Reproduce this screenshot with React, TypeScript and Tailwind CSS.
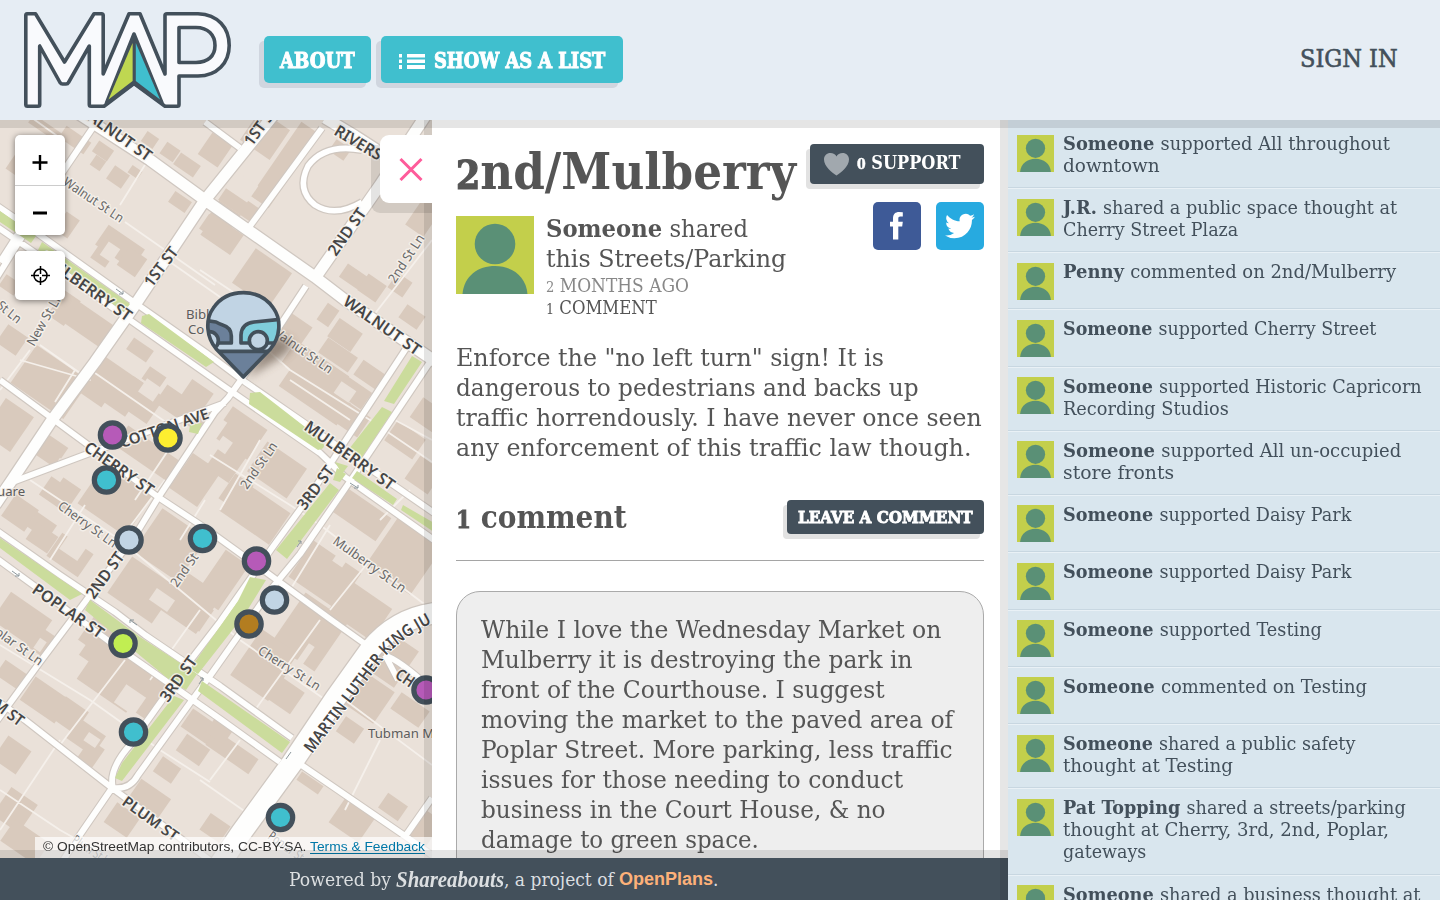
import { useLayoutEffect, useRef } from "react";
import type { ReactNode } from "react";

/* Sets one line of text to a given measure. */
function Fit({ w, children, className = "" }: { w: number; children: ReactNode; className?: string }) {
  const ref = useRef<HTMLSpanElement>(null);
  useLayoutEffect(() => {
    const el = ref.current;
    if (el && el.offsetWidth) el.style.transform = `scaleX(${w / el.offsetWidth})`;
  }, [w]);
  return (
    <span className={`block whitespace-nowrap ${className}`} style={{ width: w }}>
      <span ref={ref} className="inline-block origin-left">{children}</span>
    </span>
  );
}

/* A digit drawn at x-height. */
function Fig({ children, className = "" }: { children: ReactNode; className?: string }) {
  return <span className={`text-[0.77em] leading-none ${className}`}>{children}</span>;
}

type Pt = [number, number];

const thinStreets = [
  "M98,120L60,176L-6,282", "M0,262L30,215", "M205,122L240,148", "M322,128L250,226", "M0,380L95,450L158,497L205,528L270,575L330,619L365,644",
  "M10,483L90,453L225,403", "M306,286L275,333L228,398L215,412L158,498L136,534L82,606L40,662L-4,722",
  "M0,703L25,720L112,788L180,838L212,862", "M112,788L75,842L62,862", "M300,764L405,836L436,858",
  "M432,798L404,838", "M384,655Q400,660 432,690", "M385,655L398,680",
  "M-4,205L37,233L128,298L205,352L245,382L300,420L350,455L434,513",
  "M-4,226L60,270L127,318L225,387L320,453L345,477L434,540",
  "M-4,530L60,575L115,612L145,635L220,686L292,738",
  "M-4,558L40,590L110,642L190,698L220,719L280,762",
  "M407,347L338,452L307,500L272,548L220,622L190,661L130,745Q108,770 113,788",
  "M436,353L353,477L300,554L272,588L212,673L190,703L138,775Q130,790 113,788",
];
const wideStreets = [
  "M76,112L150,160L205,200L315,277L345,300L436,362",
  "M276,112L205,200L135,305L95,362L52,420L12,480L-5,505",
  "M428,112L380,185L315,278",
  "M325,118L355,136L400,165",
];
const mlk = "M436,613Q396,618 370,650L335,699L292,763L241,833L220,864";
const alleys = [
  "M148,160L120,205", "M125,222L215,285", "M0,95L60,138", "M160,255L220,297", "M40,345L90,380L20,360", "M200,270L245,300", "M40,345L75,370L55,402",
  "M95,373L180,432", "M245,330L290,370L370,420L432,462", "M210,455L290,505L320,525L432,610", "M30,480L120,540L180,590L240,640L340,710",
  "M0,645L90,700L160,750L210,782", "M330,525L290,590", "M370,560L330,610", "M125,660L60,745", "M60,740L0,830", "M0,790L60,830L110,858",
  "M345,700L432,765", "M380,740L345,810", "M320,620L255,710", "M205,500L180,540", "M165,480L120,540", "M260,440L220,510",
  "M395,420L432,440", "M410,490L380,520", "M200,610L150,680", "M240,740L210,780", "M200,780L250,815", "M290,380L350,420", "M85,505L50,560",
  "M432,240L370,320", "M350,300L432,365", "M30,350L0,390", "M175,440L135,500",
];
const greens = [
  "M0,211L36,236L31,243L0,222Z", "M42,242L130,304L124,312L38,250Z", "M142,316L149,314L214,362L206,367L141,323Z",
  "M250,393L260,392L318,437Q330,448 318,450L249,404Z", "M337,468L346,474L340,482L333,480Z", "M357,471L397,499L393,505L352,478Z", "M403,505L434,523L434,532L401,510Z",
  "M412,356L422,362L394,404L384,401Z", "M382,407L392,412L360,460L349,449Z", "M335,462L348,466L342,474Z",
  "M330,483L339,490L287,559L276,550Z", "M250,577L266,580L245,614L198,674L190,669L238,601Z",
  "M0,538L82,594L70,600L0,548Z", "M90,600L140,637L197,674L186,690L172,682L85,610Z", "M202,681L290,742L282,753L198,691Z",
  "M174,696L184,700L122,781L115,778L122,763Z", "M190,425L202,423L198,434L189,432Z",
];
/* centre x, centre y, width, height; aligned to the street grid */
const buildings: [number, number, number, number][] = [
  [45, 128, 34, 10], [75, 140, 30, 14], [103, 151, 18, 13], [98, 163, 12, 12], [118, 177, 18, 16], [135, 172, 12, 9], [170, 152, 16, 14], [187, 165, 24, 14], [180, 202, 20, 13],
  [150, 140, 14, 12], [215, 150, 24, 26], [225, 215, 26, 18], [285, 165, 22, 90], [265, 135, 36, 36], [240, 205, 42, 16], [222, 235, 36, 24], [262, 278, 44, 42],
  [215, 228, 20, 16], [67, 225, 16, 22], [20, 165, 20, 22], [40, 200, 22, 20], [120, 247, 44, 24], [132, 262, 22, 22], [105, 252, 18, 26], [214, 228, 24, 18], [64, 308, 20, 30],
  [10, 285, 18, 14], [12, 340, 24, 22], [140, 350, 24, 14], [90, 325, 44, 26], [355, 278, 28, 16], [372, 288, 22, 20], [412, 317, 22, 16],
  [328, 315, 14, 20], [345, 335, 28, 22], [338, 355, 36, 18], [370, 375, 28, 18], [295, 330, 26, 24], [315, 370, 64, 28], [350, 390, 40, 20],
  [50, 382, 64, 46], [8, 425, 34, 42], [112, 388, 54, 44], [140, 400, 38, 32], [154, 378, 20, 15], [185, 410, 58, 22], [195, 398, 26, 28], [50, 450, 28, 24], [147, 453, 62, 24], [60, 492, 32, 28], [115, 500, 58, 48],
  [20, 513, 28, 26], [42, 526, 24, 18], [70, 555, 38, 28], [42, 538, 26, 20], [195, 480, 34, 42], [240, 433, 42, 36], [226, 462, 28, 32], [277, 470, 48, 36], [255, 512, 60, 38], [236, 492, 22, 30],
  [170, 545, 54, 52], [142, 590, 54, 44], [190, 602, 46, 46], [222, 580, 28, 54], [315, 395, 70, 26], [350, 418, 34, 24], [405, 440, 34, 24], [428, 415, 28, 24], [424, 475, 28, 28], [362, 515, 52, 28],
  [405, 555, 54, 60], [325, 575, 58, 44], [360, 610, 52, 38], [310, 632, 52, 60], [265, 665, 46, 56], [285, 695, 30, 26], [385, 655, 52, 44], [365, 695, 46, 38], [350, 730, 22, 18],
  [22, 620, 50, 34], [42, 642, 22, 24], [95, 638, 26, 46], [115, 676, 60, 48], [150, 697, 30, 42], [45, 700, 42, 28], [70, 715, 28, 26], [86, 737, 32, 24], [90, 755, 18, 26], [12, 675, 28, 18],
  [12, 755, 28, 28], [15, 810, 32, 34], [25, 842, 42, 26], [122, 820, 28, 24], [150, 798, 36, 22], [167, 770, 22, 18], [205, 730, 44, 22], [193, 750, 28, 20], [232, 752, 52, 18], [220, 730, 22, 20],
  [195, 613, 28, 26], [310, 783, 26, 10], [352, 820, 36, 30], [393, 807, 24, 18], [425, 830, 20, 34], [215, 828, 24, 20], [410, 710, 34, 20], [400, 285, 18, 18], [425, 215, 22, 38], [340, 150, 18, 14],
];
const openLots: [number, number, number, number][] = [
  [242, 187, 26, 20], [110, 252, 14, 16], [112, 415, 26, 12], [150, 390, 18, 16], [224, 445, 12, 14], [345, 392, 18, 14], [162, 600, 22, 14], [70, 650, 20, 26], [130, 700, 24, 22],
  [75, 545, 22, 24], [60, 470, 14, 20], [305, 655, 7, 24], [298, 668, 16, 12], [215, 430, 12, 26], [92, 740, 14, 10], [340, 560, 12, 10], [40, 645, 8, 12],
];

const caps: { t: string; a: Pt; b: Pt; s: number }[] = [
  { t: "WALNUT ST", a: [75, 111], b: [147, 162], s: 16 }, { t: "1ST ST", a: [152, 288], b: [179, 252], s: 16 }, { t: "1ST ST", a: [252, 147], b: [279, 110], s: 16 },
  { t: "MULBERRY ST", a: [39, 260], b: [127, 322], s: 16 }, { t: "RIVERS", a: [333, 134], b: [378, 161], s: 16 }, { t: "2ND ST", a: [336, 257], b: [367, 213], s: 16 },
  { t: "WALNUT ST", a: [342, 304], b: [416, 356], s: 16 }, { t: "COTTON AVE", a: [122, 448], b: [210, 418], s: 15 }, { t: "CHERRY ST", a: [83, 450], b: [149, 496], s: 16 },
  { t: "2ND ST", a: [94, 600], b: [125, 557], s: 16 }, { t: "POPLAR ST", a: [31, 592], b: [99, 639], s: 16 }, { t: "MULBERRY ST", a: [303, 429], b: [390, 491], s: 16 },
  { t: "3RD ST", a: [305, 511], b: [335, 471], s: 16 }, { t: "3RD ST", a: [168, 703], b: [198, 661], s: 16 }, { t: "PLUM ST", a: [121, 804], b: [174, 842], s: 15 },
  { t: "M ST", a: [-8, 707], b: [19, 727], s: 16 }, { t: "CH", a: [394, 677], b: [410, 688], s: 16 },
];
const lanes: { t: string; a: Pt; b: Pt }[] = [
  { t: "Walnut St Ln", a: [62, 184], b: [120, 223] }, { t: "New St Ln", a: [34, 347], b: [63, 296] }, { t: "St Ln", a: [-4, 307], b: [17, 324] }, { t: "2nd St Ln", a: [395, 284], b: [425, 238] },
  { t: "Walnut St Ln", a: [270, 333], b: [329, 374] }, { t: "Cherry St Ln", a: [57, 508], b: [113, 548] }, { t: "2nd St", a: [177, 588], b: [199, 557] },
  { t: "2nd St Ln", a: [247, 490], b: [278, 446] }, { t: "Mulberry St Ln", a: [332, 543], b: [402, 593] }, { t: "plar St Ln", a: [-6, 634], b: [39, 666] },
  { t: "Cherry St Ln", a: [257, 653], b: [317, 691] }, { t: "Plum St Ln", a: [71, 842], b: [110, 868] }, { t: "Poplar St", a: [267, 838], b: [300, 862] },
];
const pins: [number, number, string][] = [
  [112.5, 435, "#b65ab8"], [168, 438, "#fdee30"], [106.5, 480, "#40bfce"], [129, 540, "#c1d4e4"], [202.5, 538.5, "#40bfce"], [256.5, 561, "#b65ab8"], [274.5, 600, "#c1d4e4"],
  [249, 624, "#b37d20"], [123, 643.5, "#c1ee52"], [133.5, 732, "#40bfce"], [280.5, 817.5, "#40bfce"], [426, 690, "#b65ab8"],
];

function PathText({ t, a, b, size, bold }: { t: string; a: Pt; b: Pt; size: number; bold?: boolean }) {
  const dx = b[0] - a[0];
  const dy = b[1] - a[1];
  return (
    <text
      transform={`translate(${a[0]} ${a[1]}) rotate(${(Math.atan2(dy, dx) * 180) / Math.PI})`}
      fontSize={size}
      fontWeight={bold ? 600 : 400}
      fill={bold ? "#464646" : "#686868"}
      stroke="#f7f3ee"
      strokeOpacity={0.8}
      strokeWidth={3}
      paintOrder="stroke"
      textLength={Math.hypot(dx, dy)}
      lengthAdjust="spacingAndGlyphs"
    >
      {t}
    </text>
  );
}

function StreetMap() {
  return (
    <svg className="block h-full w-full font-['Noto_Sans','Open_Sans',sans-serif] [font-stretch:normal]" viewBox="0 120 432 738" strokeLinejoin="round">
      <rect y="120" width="432" height="738" fill="#eae1d9" />
      {buildings.map(([x, y, w, h], i) => (
        <rect key={i} x={x - w / 2} y={y - h / 2} width={w} height={h} transform={`rotate(34.5 ${x} ${y})`} fill="#d9cabd" />
      ))}
      {openLots.map(([x, y, w, h], i) => (
        <rect key={i} x={x - w / 2} y={y - h / 2} width={w} height={h} transform={`rotate(34.5 ${x} ${y})`} fill="#eae1d9" />
      ))}
      <path d={alleys.join("")} fill="none" stroke="#f5f0eb" strokeWidth="1.8" />
      <g fill="none">
        <path d="M362,150Q325,143 308,166Q296,190 315,205Q335,218 362,202" stroke="#cfc7c0" strokeWidth="8" />
        <path d={thinStreets.join("")} stroke="#cfc7c0" strokeWidth="8" />
        <path d={wideStreets.join("")} stroke="#cfc7c0" strokeWidth="13.5" />
        <path d={mlk} stroke="#cfc7c0" strokeWidth="23" />
        <path d="M362,150Q325,143 308,166Q296,190 315,205Q335,218 362,202" stroke="#fff" strokeWidth="5.5" />
        <path d={thinStreets.join("")} stroke="#fefefd" strokeWidth="5.8" />
        <path d={wideStreets.join("")} stroke="#fefefd" strokeWidth="11" />
        <path d={mlk} stroke="#fefefd" strokeWidth="20.5" />
      </g>
      <path d={greens.join("")} fill="#cbdc9c" />
      <g stroke="#8d989d" strokeWidth="1" fill="none">
        <path d="M350,483l8,5m0,-3v3h-4M116,289l7,5m0,-3v3h-4M12,571l7,5m0,-3v3h-4M137,625l-7,-5m0,3v-3h4M297,547l4,-6m-3,0h3v3M199,684l4,-6m-3,0h3v3M286,759l5,-7" />
      </g>
      {lanes.map((l, i) => <PathText key={i} {...l} size={13} />)}
      {caps.map((l, i) => <PathText key={i} {...l} size={l.s} bold />)}
      <path id="mlk" d="M312,754L386,656Q406,633 455,612" fill="none" />
      <text fontSize="16.5" fontWeight="600" fill="#464646" stroke="#fff" strokeWidth="2" paintOrder="stroke">
        <textPath href="#mlk" textLength="180" lengthAdjust="spacingAndGlyphs">MARTIN LUTHER KING JU</textPath>
      </text>
      <g fontSize="13.2" fill="#5c5c5c" stroke="#eee6df" strokeWidth="2" paintOrder="stroke">
        <text x="186" y="319">Bibl</text>
        <text x="188" y="334">Co</text>
        <text x="-3" y="496">uare</text>
        <text x="368" y="738">Tubman M</text>
      </g>
      {pins.map(([x, y, c], i) => (
        <circle key={i} cx={x} cy={y} r="12.2" fill={c} stroke="#43505b" strokeWidth="5.2" />
      ))}
      <rect x="424" y="675" width="8" height="30" fill="none" />
      <defs>
        <filter id="soft" x="-50%" y="-50%" width="200%" height="200%"><feGaussianBlur stdDeviation="5" /></filter>
        <clipPath id="drop"><path d="M160,294L76,206C48,172 44,120 70,84C92,52 125,37 160,37C195,37 228,52 250,84C276,120 272,172 244,206Z" /></clipPath>
      </defs>
      <path d="M246,378L272,335L290,340Q296,348 280,358Z" fill="#5b4b3e" opacity=".6" filter="url(#soft)" />
      <g transform="translate(190 280) scale(.33333)" stroke="#43505b" strokeWidth="11">
        <g clipPath="url(#drop)">
          <path d="M40,30H280V300H40Z" fill="#c1d4e4" stroke="none" />
          <path d="M40,214H280V300H40Z" fill="#6b809a" />
          <path d="M50,122L78,126Q88,132 96,134Q125,142 124,170V189H88L50,160Z" fill="#6b809a" />
          <circle cx="58" cy="182" r="27" fill="#c1d4e4" />
          <path d="M153,189V165Q155,130 192,126L280,117V189Z" fill="#7fcddb" />
          <circle cx="205" cy="182" r="27" fill="#c1d4e4" />
        </g>
        <path d="M160,291L78,206C50,172 44,120 70,84C92,52 125,38 160,38C195,38 228,52 250,84C276,120 270,172 242,206Z" fill="none" />
      </g>
    </svg>
  );
}

function Logo() {
  return (
    <svg className="h-[120px] w-[264px] shrink-0" viewBox="0 0 264 120" stroke="#43505b" strokeWidth="3.6" strokeLinejoin="round">
      <path d="M27,13.8H35.5L64.5,62L94,13.8H101.5Q103.2,13.8 103.2,15.5V74L129,13.8H140L165,74V15.5Q165,13.8 167,13.8H198C218,14.5 229.2,28 229.2,45.5C229.2,63 217,76 198,76H179V104.5Q179,106.2 177.5,106.2H165L134,83.5L104,106.2H91Q89.3,106.2 89.3,104.5V46L68.5,82.5Q67.8,84 66,84H62.5Q61,84 60,82.5L39.7,46V104.5Q39.7,106.2 38,106.2H27.5Q25.8,106.2 25.8,104.5V15.5Q25.8,13.8 27,13.8Z" fill="#f9fafd" />
      <path d="M179,27.5H196C208,27.5 215,35 215,45.5C215,56 208,62.5 196,62.5H179Z" fill="#e6edf4" />
      <path d="M134,34L106.5,103L134,83L162,103Z" fill="#43505b" />
      <path d="M132.6,43V81L108.5,99.5Z" fill="#bfd751" stroke="none" />
      <path d="M135.8,43V81L160,99.5Z" fill="#40bfce" stroke="none" />
    </svg>
  );
}

function Avatar({ className }: { className: string }) {
  return (
    <svg className={`shrink-0 ${className}`} viewBox="0 0 78 78" preserveAspectRatio="none">
      <rect width="78" height="78" fill="#c3cf4b" />
      <circle cx="39" cy="28" r="20.3" fill="#5a9076" />
      <path d="M6.500,78C8,60 22,50 39,50S70,60 71.500,78Z" fill="#5a9076" />
    </svg>
  );
}

const body: [string, number][] = [
  ['Enforce the "no left turn" sign! It is', 428], ["dangerous to pedestrians and backs up", 463],
  ["traffic horrendously. I have never once seen", 526], ["any enforcement of this traffic law though.", 515],
];
const comment: [string, number][] = [
  ["While I love the Wednesday Market on", 460], ["Mulberry it is destroying the park in", 431], ["front of the Courthouse. I suggest", 404], ["moving the market to the paved area of", 472],
  ["Poplar Street. More parking, less traffic", 472], ["issues for those needing to conduct", 422], ["business in the Court House, & no", 405], ["damage to green space.", 278],
];
const feed: { who: string; lines: [string, number][]; h: number }[] = [
  { who: "Someone", lines: [["supported All throughout", 327], ["downtown", 97]], h: 64 },
  { who: "J.R.", lines: [["shared a public space thought at", 334], ["Cherry Street Plaza", 175]], h: 64 },
  { who: "Penny", lines: [["commented on 2nd/Mulberry", 333]], h: 57.4 },
  { who: "Someone", lines: [["supported Cherry Street", 313]], h: 57.4 },
  { who: "Someone", lines: [["supported Historic Capricorn", 359], ["Recording Studios", 166]], h: 64 },
  { who: "Someone", lines: [["supported All un-occupied", 338], ["store fronts", 111]], h: 64 },
  { who: "Someone", lines: [["supported Daisy Park", 288]], h: 57.4 },
  { who: "Someone", lines: [["supported Daisy Park", 288]], h: 57.4 },
  { who: "Someone", lines: [["supported Testing", 259]], h: 57.4 },
  { who: "Someone", lines: [["commented on Testing", 304]], h: 57.4 },
  { who: "Someone", lines: [["shared a public safety", 292], ["thought at Testing", 170]], h: 64 },
  { who: "Pat Topping", lines: [["shared a streets/parking", 343], ["thought at Cherry, 3rd, 2nd, Poplar,", 326], ["gateways", 83]], h: 86.5 },
  { who: "Someone", lines: [["shared a business thought at", 357], ["Testing", 64]], h: 64 },
];

export default function App() {
  return (
    <div className="flex h-[900px] w-[1440px] flex-col overflow-hidden bg-white font-['DejaVu_Serif_Condensed','DejaVu_Serif',serif] [font-stretch:condensed] text-[#555]">
      <header className="flex h-[120px] shrink-0 items-start bg-[#e6edf4]">
        <Logo />
        <button className="mt-9 h-[47px] w-[107px] rounded-[5px] bg-[#40bfce] pl-4 text-left text-[22px] leading-[48px] font-bold text-white shadow-[-5px_5px_0_#d0d6df] [-webkit-text-stroke:1px_white]">
          <Fit w={75}>ABOUT</Fit>
        </button>
        <button className="mt-9 ml-2.5 flex h-[47px] w-[242px] rounded-[5px] bg-[#40bfce] pl-[18px] text-left text-[22px] leading-[48px] font-bold text-white shadow-[-5px_5px_0_#d0d6df] [-webkit-text-stroke:1px_white]">
          <svg className="mt-[18px] mr-[9px] h-[15px] w-[26px]" viewBox="0 0 26 15" fill="#fff">
            <path d="M0,0h3v3.500h-3zM0,5.500h3v3.500h-3zM0,11h3v4h-3zM8,0h18v3.500h-18zM8,5.500h18v3.500h-18zM8,11h18v4h-18z" />
          </svg>
          <Fit w={171}>SHOW AS A LIST</Fit>
        </button>
        <div className="mt-[42px] mr-[42px] ml-auto text-[25px] leading-[34px] text-[#43505b] [-webkit-text-stroke:0.6px_#43505b]">
          <Fit w={98}>SIGN IN</Fit>
        </div>
      </header>

      <div className="flex h-[780px]">
        <div className="flex w-[1008px] flex-col">
          <div className="relative flex h-[738px]">
            <section className="relative w-[432px] shrink-0 overflow-hidden">
              <StreetMap />
              <div className="absolute top-0 right-0 bottom-0 w-2 bg-black/10" />
              <div className="absolute top-[15px] left-[15px] flex w-[50px] flex-col gap-4">
                <div className="flex h-[100px] flex-col rounded-[5px] bg-white shadow-[0_1px_6px_rgba(0,0,0,.5)]">
                  <div className="flex h-[51px] items-center justify-center border-b border-[#ccc] pt-[3px] pr-px">
                    <svg width="16" height="16" viewBox="0 0 16 16" stroke="#000" strokeWidth="2.4"><path d="M0.500,8.500H15.500M8,1V16" /></svg>
                  </div>
                  <div className="flex grow items-center justify-center pr-px pb-0.5">
                    <svg width="16" height="16" viewBox="0 0 16 16" stroke="#000" strokeWidth="3"><path d="M1,11H15" /></svg>
                  </div>
                </div>
                <div className="flex h-[49px] items-center justify-center rounded-[5px] bg-white shadow-[0_1px_6px_rgba(0,0,0,.5)]">
                  <svg width="20" height="20" viewBox="0 0 20 20" fill="none" stroke="#000" strokeWidth="1.500"><circle cx="10.500" cy="9.500" r="6.500" /><path d="M10.500,0V8M10.500,11V19M1,9.500H9M12,9.500H20" /></svg>
                </div>
              </div>
              <div className="absolute right-0 bottom-0 h-[21px] w-[397px] bg-white/70 pl-2 font-['Liberation_Sans',sans-serif] text-[13px] leading-[20px] text-[#333] [font-stretch:normal]">
                <Fit w={382}>© OpenStreetMap contributors, CC-BY-SA. <a className="text-[#0078a8] underline underline-offset-2">Terms &amp; Feedback</a></Fit>
              </div>
            </section>

            <main className="w-[576px] overflow-hidden bg-white px-6 pt-[21px] shadow-[inset_-8px_0_0_#e6e6e6]">
              <div className="flex w-[528px] justify-between">
                <div>
                  <h1 className="mt-px text-[50px] leading-[60px] font-bold">
                    <Fit w={340}><Fig className="[-webkit-text-stroke:1.2px_#555]">2</Fig>nd/Mulberry</Fit>
                  </h1>
                  <div className="mt-3 flex gap-3">
                    <Avatar className="mt-0.5 h-[78px] w-[78px]" />
                    <div className="text-[25px] leading-[30px]">
                      <Fit w={202}><b>Someone</b> shared</Fit>
                      <Fit w={240}>this Streets/Parking</Fit>
                      <div className="pt-px text-[18.5px] leading-[22px]">
                        <Fit w={143} className="text-[#888]"><Fig>2</Fig> MONTHS AGO</Fit>
                        <Fit w={111}><Fig>1</Fig> COMMENT</Fit>
                      </div>
                    </div>
                  </div>
                </div>
                <div className="mt-[3px] flex flex-col items-end gap-[18px]">
                  <button className="flex h-10 w-[174px] rounded-[4px] bg-[#43505b] pl-[14px] text-left text-[19px] leading-[37px] font-bold text-white shadow-[-4px_5px_0_#e2e2e2]">
                    <svg className="mt-[9px] mr-2 h-[23px] w-[25px]" viewBox="0 0 25 23" fill="#a1a8ae"><path d="M12.500,22.500C8,20 0,13 0,6.500C0,2.500 3,0 6.300,0C9.300,0 11.500,1.500 12.500,3.500C13.500,1.500 15.700,0 18.700,0C22,0 25,2.500 25,6.500C25,13 17,20 12.500,22.500Z" /></svg>
                    <Fit w={104}><Fig className="[-webkit-text-stroke:0.5px_white]">0</Fig> SUPPORT</Fit>
                  </button>
                  <div className="flex gap-[15px]">
                    <div className="flex h-12 w-12 items-center justify-center rounded-[5px] bg-[#3e5a97]">
                      <svg width="14" height="28" viewBox="0 0 14 28" fill="#fff"><path d="M3,27.500V14.500H0V9.800H3V6.500C3,2 5.500,0 9,0L12.800,0.200V4.600H10.300C8.800,4.600 8.300,5.300 8.300,6.700V9.800H12.800L12.200,14.500H8.300V27.500Z" /></svg>
                    </div>
                    <div className="flex h-12 w-12 items-center justify-center rounded-[5px] bg-[#27aae0]">
                      <svg width="30" height="30" viewBox="0 0 24 24" fill="#fff"><path d="M23.950 4.570a10 10 0 0 1-2.820.770 4.960 4.960 0 0 0 2.160-2.720c-.950.550-2 .960-3.130 1.180a4.920 4.920 0 0 0-8.380 4.480C7.690 8.090 4.070 6.130 1.640 3.160a4.920 4.920 0 0 0 1.520 6.570 4.900 4.900 0 0 1-2.230-.610v.060a4.920 4.920 0 0 0 3.950 4.830 5 5 0 0 1-2.210.080 4.940 4.940 0 0 0 4.600 3.420A9.870 9.870 0 0 1 0 19.540a13.990 13.990 0 0 0 7.550 2.210c9.050 0 14-7.500 14-13.980 0-.210 0-.420-.020-.630a9.940 9.940 0 0 0 2.460-2.550z" /></svg>
                    </div>
                  </div>
                </div>
              </div>
              <div className="mt-6 text-[25px] leading-[30px]">
                {body.map(([t, w]) => <Fit key={t} w={w}>{t}</Fit>)}
              </div>
              <div className="mt-[35px] flex h-[63px] justify-between border-b border-[#a5a5a5]">
                <h2 className="text-[32px] leading-[38px] font-bold"><Fit w={171}><Fig className="[-webkit-text-stroke:0.8px_#555]">1</Fig> comment</Fit></h2>
                <button className="mt-0.5 h-[34px] w-[197px] rounded-[4px] bg-[#43505b] pl-[11px] text-left text-[17.500px] leading-[35px] font-bold text-white shadow-[-4px_5px_0_#e2e2e2] [-webkit-text-stroke:0.9px_white]">
                  <Fit w={175}>LEAVE A COMMENT</Fit>
                </button>
              </div>
              <div className="mt-[30px] h-[400px] w-[528px] rounded-3xl border border-[#aaa] bg-[#eee] px-6 pt-[23px] text-[25px] leading-[30px]">
                {comment.map(([t, w]) => <Fit key={t} w={w}>{t}</Fit>)}
              </div>
            </main>

            <div className="pointer-events-none absolute inset-x-0 top-0 h-2 bg-black/10" />
            <div className="pointer-events-none absolute inset-x-0 bottom-0 h-2 bg-black/10" />
            <div className="absolute top-[25px] left-[371px] h-[68px] w-[61px] rounded-bl-[9px] bg-black/10" />
            <button className="absolute top-[15px] left-[380px] flex h-[68px] w-[61px] items-center justify-center rounded-l-[9px] bg-white">
              <svg width="24" height="24" viewBox="0 0 24 24" stroke="#fe5b9a" strokeWidth="3"><path d="M1.500,2L22.500,23M22.500,2L1.500,23" /></svg>
            </button>
          </div>
          <footer className="flex h-[42px] bg-[#43505b] pl-[289px] text-[19px] leading-[42px] text-[#dcdfe1] shadow-[inset_-8px_0_0_#3c4852]">
            <Fit w={102}>Powered by</Fit>
            <Fit w={108} className="ml-[5px] font-['Liberation_Serif',serif] text-[24px] font-bold italic">Shareabouts</Fit>
            <Fit w={110}>, a project of</Fit>
            <Fit w={94} className="ml-[5px] font-['Liberation_Sans',sans-serif] text-[18px] font-bold text-[#fdb179]">OpenPlans</Fit>
            <span>.</span>
          </footer>
        </div>

        <aside className="w-[432px] overflow-hidden bg-[#d9e6ee] pt-[5px] text-[19px] leading-[22px] text-[#43505b] shadow-[inset_0_8px_0_#c3ced6]">
          {feed.map((f, i) => (
            <div key={i} className="flex gap-[9px] border-b border-[#e9f1f6] pl-[9px] shadow-[inset_0_-1px_0_#c8d7e1]" style={{ height: f.h }}>
              <Avatar className="mt-[9.5px] h-[37px] w-[37px]" />
              <div className="pt-[7px]">
                {f.lines.map(([t, w], n) => <Fit key={t} w={w}>{n === 0 && <b>{f.who} </b>}{t}</Fit>)}
              </div>
            </div>
          ))}
        </aside>
      </div>
    </div>
  );
}
